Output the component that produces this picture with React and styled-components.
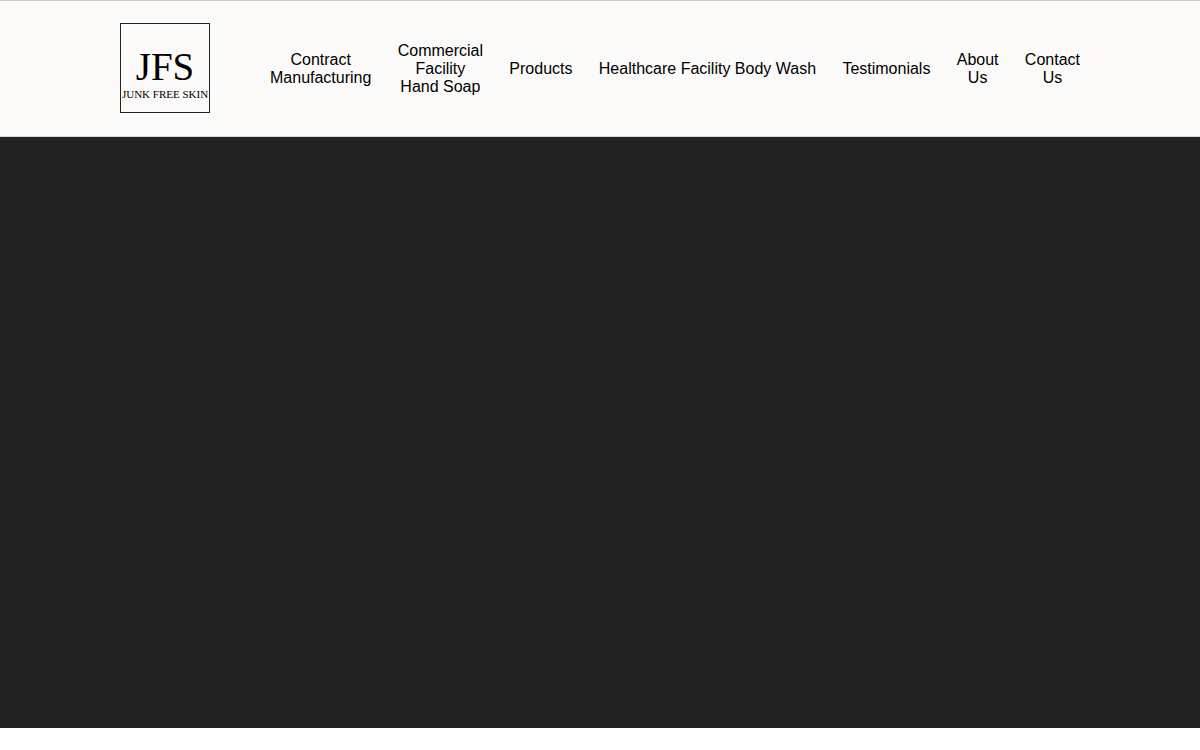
import React from "react";
import styled, { createGlobalStyle } from "styled-components";

const GlobalStyle = createGlobalStyle`
  * {
    box-sizing: border-box;
  }

  body {
    margin: 0;
    background: #fff;
    font-family: "Liberation Sans", Arial, sans-serif;
  }
`;

const Header = styled.header`
  display: flex;
  align-items: center;
  gap: 60px;
  padding: 22px 120px 23px;
  background: #fcfaf8;
  border-top: 1px solid #ccc9c8;
  border-bottom: 1px solid #d8d6d4;
`;

const Logo = styled.a`
  display: flex;
  flex-direction: column;
  flex-shrink: 0;
  align-items: center;
  width: 90px;
  height: 90px;
  padding-top: 22px;
  border: 1px solid #222;
  color: #000;
  font-family: "Liberation Serif", "Times New Roman", serif;
  text-decoration: none;
`;

const Initials = styled.span`
  font-size: 39px;
  line-height: 42px;
`;

const BrandName = styled.span`
  font-size: 11px;
  line-height: 12px;
  white-space: nowrap;
`;

const Nav = styled.nav`
  flex: 1;
`;

const NavList = styled.ul`
  display: flex;
  align-items: center;
  justify-content: space-between;
  margin: 0;
  padding: 2px 0 0;
  list-style: none;
`;

const NavLink = styled.a`
  display: block;
  color: #000;
  font-size: 16px;
  line-height: 18px;
  text-align: center;
  text-decoration: none;
  white-space: pre-line;
`;

const Hero = styled.main`
  height: calc(100vh - 159px);
  background: #222;
`;

const links = [
  { label: "Contract\nManufacturing", href: "#manufacturing" },
  { label: "Commercial\nFacility\nHand Soap", href: "#hand-soap" },
  { label: "Products", href: "#products" },
  { label: "Healthcare Facility Body Wash", href: "#body-wash" },
  { label: "Testimonials", href: "#testimonials" },
  { label: "About\nUs", href: "#about" },
  { label: "Contact\nUs", href: "#contact" },
];

const App = () => (
  <>
    <GlobalStyle />
    <Header>
      <Logo href="#home">
        <Initials>JFS</Initials>
        <BrandName>JUNK FREE SKIN</BrandName>
      </Logo>
      <Nav>
        <NavList>
          {links.map(({ label, href }) => (
            <li key={href}>
              <NavLink href={href}>{label}</NavLink>
            </li>
          ))}
        </NavList>
      </Nav>
    </Header>
    <Hero />
  </>
);

export default App;
